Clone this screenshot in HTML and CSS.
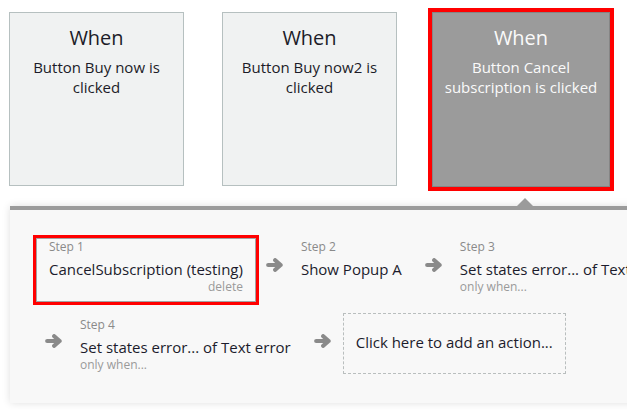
FILE: index.html
```html
<!DOCTYPE html>
<html>
<head>
<meta charset="utf-8">
<link rel="stylesheet" href="styles.css">
</head>
<body>
<div class="cards">
  <div class="card">
    <div class="card-title">When</div>
    <div class="card-desc">Button Buy now is clicked</div>
  </div>
  <div class="card">
    <div class="card-title">When</div>
    <div class="card-desc">Button Buy now2 is clicked</div>
  </div>
  <div class="card card-selected">
    <div class="card-title">When</div>
    <div class="card-desc">Button Cancel subscription is clicked</div>
  </div>
</div>
<div class="panel">
  <span class="pointer"></span>
  <div class="row row-first">
    <div class="step step-selected">
      <div class="step-label">Step 1</div>
      <div class="step-title">CancelSubscription (testing)</div>
      <div class="step-sub step-delete">delete</div>
    </div>
    <svg class="arrow" viewBox="0 0 17 14" width="17" height="14"><path d="M2.2 7H14.6M9.2 2.2L14.6 7L9.2 11.8" /></svg>
    <div class="step">
      <div class="step-label">Step 2</div>
      <div class="step-title">Show Popup A</div>
    </div>
    <svg class="arrow" viewBox="0 0 17 14" width="17" height="14"><path d="M2.2 7H14.6M9.2 2.2L14.6 7L9.2 11.8" /></svg>
    <div class="step">
      <div class="step-label">Step 3</div>
      <div class="step-title">Set states error... of Text error</div>
      <div class="step-sub">only when...</div>
    </div>
  </div>
  <div class="row row-second">
    <svg class="arrow arrow-lead" viewBox="0 0 17 14" width="17" height="14"><path d="M2.2 7H14.6M9.2 2.2L14.6 7L9.2 11.8" /></svg>
    <div class="step step-four">
      <div class="step-label">Step 4</div>
      <div class="step-title">Set states error... of Text error</div>
      <div class="step-sub">only when...</div>
    </div>
    <svg class="arrow arrow-add" viewBox="0 0 17 14" width="17" height="14"><path d="M2.2 7H14.6M9.2 2.2L14.6 7L9.2 11.8" /></svg>
    <div class="add-action">Click here to add an action...</div>
  </div>
</div>
</body>
</html>
```
FILE: styles.css
```css
html, body {
  margin: 0;
  padding: 0;
  background: #ffffff;
  overflow: hidden;
  width: 627px;
  height: 410px;
}

body {
  font-family: "Open Sans", "Liberation Sans", sans-serif;
  color: #1c1c28;
}

.cards {
  display: flex;
  align-items: flex-start;
  gap: 38px;
  padding: 12px 0 0 9px;
}

.card {
  box-sizing: border-box;
  width: 175px;
  height: 174px;
  background: #f0f2f2;
  border: 1px solid #b6c0c0;
  padding: 12px 10px 0;
  text-align: center;
}

.card-selected {
  width: 178px;
  height: 175px;
  margin-left: -3px;
  background: #9b9b9b;
  border-color: #858585;
  outline: 4px solid #ff0000;
  color: #fafafa;
}

.card-title {
  font-size: 20px;
  line-height: 26px;
}

.card-desc {
  margin-top: 6px;
  font-size: 15px;
  line-height: 20px;
}

.panel {
  position: relative;
  box-sizing: border-box;
  margin: 19px 0 0 10px;
  width: 700px;
  height: 197px;
  background: #f8f8f8;
  border-top: 4px solid #9b9b9b;
  padding: 28px 0 0 26px;
  box-shadow: 0 0 8px rgba(0, 0, 0, 0.13);
}

.pointer {
  position: absolute;
  top: -12px;
  left: 507px;
  width: 0;
  height: 0;
  border-left: 8px solid transparent;
  border-right: 8px solid transparent;
  border-bottom: 8px solid #9b9b9b;
}

.row {
  display: flex;
  align-items: flex-start;
  white-space: nowrap;
}

.row-second {
  margin-top: 11px;
}

.step {
  border: 1px solid transparent;
  padding: 0 12px 6px;
}

.step-selected {
  border-color: #a3a3a3;
  outline: 3px solid #ff0000;
}

.step-four {
  margin-top: 3px;
}

.step-label {
  font-size: 12px;
  line-height: 16px;
  color: #8a8a8a;
}

.step-title {
  margin-top: 4px;
  font-size: 15px;
  line-height: 20px;
  color: #1c1c2c;
}

.step-sub {
  font-size: 12px;
  line-height: 16px;
  color: #9a9a9a;
}

.step-delete {
  text-align: right;
}

.arrow {
  flex: none;
  margin: 20px 5px 0 10px;
}

.arrow path {
  fill: none;
  stroke: #8a8a8a;
  stroke-width: 4.2;
  stroke-linecap: round;
  stroke-linejoin: round;
}

.row-second .arrow {
  margin-top: 21px;
}

.arrow-lead {
  margin-left: 9px;
}

.arrow-add {
  margin-right: 12px;
}

.add-action {
  box-sizing: border-box;
  width: 223px;
  height: 61px;
  border: 1px dashed #b9bebe;
  padding: 0 12px 4px;
  display: flex;
  align-items: center;
  font-size: 15px;
  color: #1c1c2c;
}
```
